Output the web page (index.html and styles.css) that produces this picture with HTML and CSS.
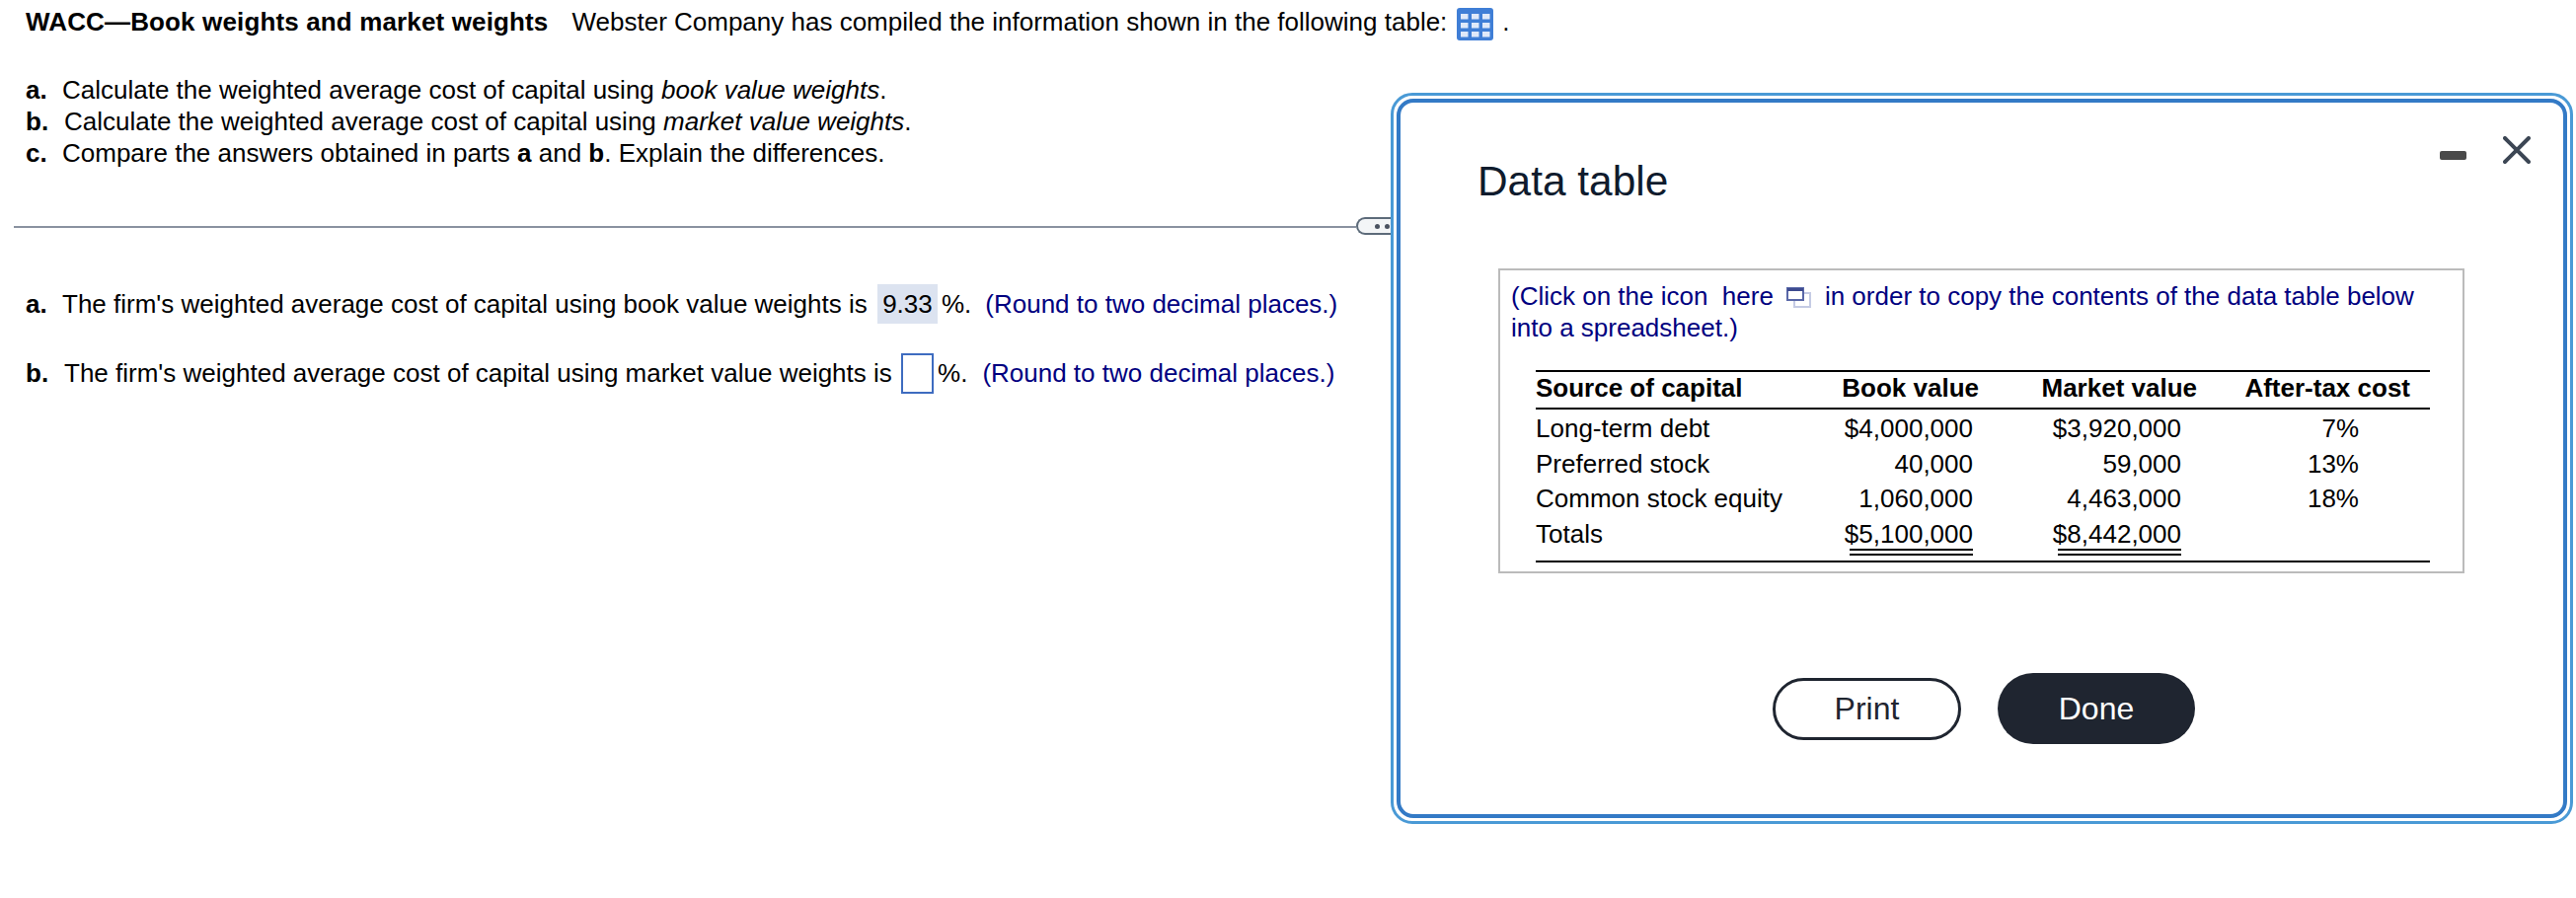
FILE: index.html
```html
<!DOCTYPE html>
<html lang="en">
<head>
<meta charset="utf-8">
<title>WACC</title>
<link rel="stylesheet" href="styles.css">
</head>
<body>
<main class="page">
  <p class="intro"><b class="heading">WACC—Book weights and market weights</b><span class="gap"></span>Webster Company has compiled the information shown in the following table:<svg class="table-icon" viewBox="0 0 37 33" aria-hidden="true"><rect width="37" height="33" rx="3" fill="#3f7ed6"/><g fill="#dfe9f9"><rect x="4" y="6" width="7.5" height="5.5"/><rect x="15" y="6" width="7.5" height="5.5"/><rect x="26" y="6" width="7.5" height="5.5"/><rect x="4" y="15" width="7.5" height="5.5"/><rect x="15" y="15" width="7.5" height="5.5"/><rect x="26" y="15" width="7.5" height="5.5"/><rect x="4" y="24" width="7.5" height="5.5"/><rect x="15" y="24" width="7.5" height="5.5"/><rect x="26" y="24" width="7.5" height="5.5"/></g></svg><span class="dot">.</span></p>
  <ol class="parts">
    <li><b class="lbl-a">a.</b>Calculate the weighted average cost of capital using <i>book value weights</i>.</li>
    <li><b class="lbl-b">b.</b>Calculate the weighted average cost of capital using <i>market value weights</i>.</li>
    <li><b class="lbl-a">c.</b>Compare the answers obtained in parts <b>a</b> and <b>b</b>. Explain the differences.</li>
  </ol>
  <div class="divider"><span class="handle"><i></i><i></i></span></div>
  <p class="answer first"><b class="lbl-a">a.</b>The firm's weighted average cost of capital using book value weights is <span class="filled">9.33</span>%.<span class="hint">(Round to two decimal places.)</span></p>
  <p class="answer"><b class="lbl-b">b.</b>The firm's weighted average cost of capital using market value weights is <span class="blank"></span>%.<span class="hint">(Round to two decimal places.)</span></p>
</main>

<section class="modal">
  <div class="modal-inner">
    <div class="controls">
      <svg class="min" viewBox="0 0 27 9"><rect width="27" height="9" rx="2" fill="#4a4a4a"/></svg>
      <svg class="close" viewBox="0 0 28 28"><path d="M2 2 26 26M26 2 2 26" stroke="#3c4654" stroke-width="4" stroke-linecap="round" fill="none"/></svg>
    </div>
    <h2 class="title">Data table</h2>
    <div class="box">
      <p class="note">(Click on the icon&nbsp; here<svg class="copy" viewBox="0 0 25 21"><rect x="8" y="6" width="16" height="14" fill="#fff" stroke="#c5cbe4" stroke-width="2"/><rect x="1" y="1" width="16" height="12" fill="#fff" stroke="#5a68a8" stroke-width="2"/><rect x="1" y="1" width="16" height="3" fill="#3d4a8f"/></svg>in order to copy the contents of the data table below<br>into a spreadsheet.)</p>
      <table class="data">
        <thead>
          <tr><th class="src">Source of capital</th><th class="c2">Book value</th><th class="c3">Market value</th><th class="c4">After-tax cost</th></tr>
        </thead>
        <tbody>
          <tr><td>Long-term debt</td><td class="c2">$4,000,000</td><td class="c3">$3,920,000</td><td class="c4">7%</td></tr>
          <tr><td>Preferred stock</td><td class="c2">40,000</td><td class="c3">59,000</td><td class="c4">13%</td></tr>
          <tr><td>Common stock equity</td><td class="c2">1,060,000</td><td class="c3">4,463,000</td><td class="c4">18%</td></tr>
          <tr class="totals"><td>Totals</td><td class="c2"><span class="total">$5,100,000</span></td><td class="c3"><span class="total">$8,442,000</span></td><td class="c4"></td></tr>
        </tbody>
      </table>
    </div>
    <div class="actions">
      <button class="btn print">Print</button>
      <button class="btn done">Done</button>
    </div>
  </div>
</section>
</body>
</html>
```

FILE: styles.css
```css
* { box-sizing: border-box; }
html, body { margin: 0; padding: 0; background: #fff; }
body {
  width: 2610px;
  height: 910px;
  position: relative;
  overflow: hidden;
  font-family: "Liberation Sans", Arial, sans-serif;
  font-size: 26px;
  color: #000;
}
.page { padding-top: 4px; }
p { margin: 0; }
.intro {
  display: flex;
  align-items: center;
  height: 37px;
  padding-left: 26px;
  white-space: pre;
}
.heading { letter-spacing: 0.14px; }
.gap { width: 24px; }
.table-icon { width: 37px; height: 33px; margin: 4px 0 0 10px; }
.dot { margin-left: 9px; }
.parts {
  list-style: none;
  margin: 34px 0 0;
  padding: 0 0 0 26px;
  line-height: 32px;
}
.lbl-a { display: inline-block; width: 37px; }
.lbl-b { display: inline-block; width: 39px; }
.divider {
  position: relative;
  margin: 58px 0 0 14px;
  width: 1360px;
  height: 2px;
  background: #8a92a0;
}
.handle {
  position: absolute;
  left: 1360px;
  top: -9px;
  width: 50px;
  height: 18px;
  background: #f3f5f7;
  border: 2px solid #5d6b7a;
  border-right: 0;
  border-radius: 9px 0 0 9px;
  display: flex;
  align-items: center;
  gap: 5px;
  padding-left: 17px;
}
.handle i { width: 5px; height: 5px; border-radius: 50%; background: #4a5260; }
.answer {
  display: flex;
  align-items: center;
  padding-left: 26px;
  height: 41px;
  margin-top: 30px;
  white-space: pre;
}
.answer.first { margin-top: 57px; height: 40px; }
.answer.first .hint { margin-left: 14px; }
.filled {
  background: #dce3f0;
  margin: 0 4px 0 3px;
  line-height: 40px;
  height: 40px;
  width: 61px;
  text-align: center;
}
.blank {
  width: 33px;
  height: 41px;
  border: 2.5px solid #3e6cc0;
  margin: 0 4px 0 2px;
  background: #fff;
}
.hint { color: #00007f; margin-left: 15px; }

.modal {
  position: absolute;
  left: 1409px;
  top: 94px;
  width: 1198px;
  height: 741px;
  border: 3px solid #4a9ad6;
  border-radius: 22px;
  padding: 3px;
  background: #fff;
}
.modal-inner {
  position: relative;
  height: 100%;
  border: 4px solid #337ac6;
  border-radius: 17px;
  padding: 56px 0 0 78px;
}
.controls {
  position: absolute;
  right: 33px;
  top: 34px;
  display: flex;
  align-items: center;
  gap: 37px;
}
.min { width: 27px; height: 9px; margin-top: 10px; }
.close { width: 28px; height: 28px; }
.title {
  margin: 0;
  font-size: 42.4px;
  font-weight: 400;
  line-height: 48px;
  color: #0f1b2d;
}
.box {
  width: 979px;
  height: 309px;
  margin: 64px 0 0 21px;
  border: 2px solid #bbb;
  padding: 10px 0 0 11px;
}
.note {
  color: #00007f;
  line-height: 32px;
  width: 950px;
}
.copy { width: 25px; height: 21px; margin: 0 14px 0 13px; vertical-align: -3px; }
.data {
  border-collapse: collapse;
  table-layout: fixed;
  width: 906px;
  margin: 27px 0 0 25px;
  border-top: 2px solid #000;
  border-bottom: 2px solid #000;
}
.data th, .data td { padding-top: 0; padding-bottom: 0; padding-left: 0; }
.data th {
  height: 38px;
  font-weight: 700;
  text-align: right;
  vertical-align: top;
  border-bottom: 2px solid #000;
  line-height: 33px;
}
.data th.src, .data td:first-child { text-align: left; width: 308px; }
.data td { text-align: right; padding-top: 3px; line-height: 32.7px; height: 35.7px; }
th.c2 { width: 144px; padding-right: 3px; }
th.c3 { width: 228px; padding-right: 10px; }
th.c4 { width: 226px; padding-right: 20px; }
td.c2 { padding-right: 9px; }
td.c3 { padding-right: 26px; }
td.c4 { padding-right: 72px; }
.data .totals td { height: 46px; vertical-align: top; }
.total {
  display: block;
  position: relative;
  height: 43px;
}
.total::after {
  content: "";
  position: absolute;
  right: 0;
  top: 31px;
  width: 125px;
  height: 0;
  border-bottom: 7px double #000;
}
.actions {
  position: absolute;
  left: 0;
  right: 0;
  top: 578px;
  height: 72px;
  padding-left: 377px;
  display: flex;
  align-items: center;
  gap: 37px;
}
.btn {
  font-family: inherit;
  font-size: 32px;
  border-radius: 32px;
  padding: 0;
}
.print {
  width: 191px;
  height: 63px;
  background: #fff;
  color: #1f2530;
  border: 3.5px solid #1f2530;
}
.done {
  width: 200px;
  height: 72px;
  background: #1f2530;
  color: #fff;
  border: 0;
  border-radius: 36px;
}
```
